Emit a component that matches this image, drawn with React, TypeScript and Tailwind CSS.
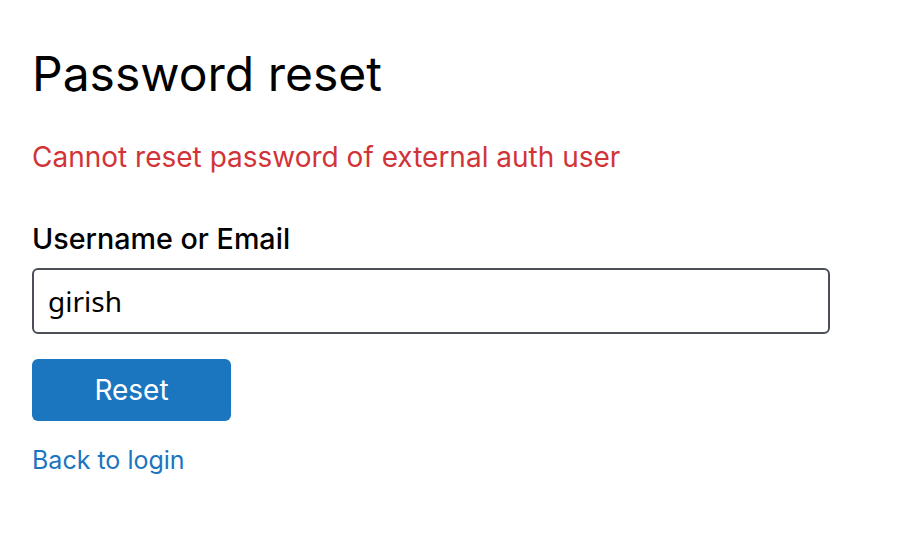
export default function App() {
  return (
    <main className="min-h-screen bg-white px-8 pt-[44px] font-['Inter',sans-serif] text-black">
      <h1 className="text-[48px] leading-[60px] font-normal">Password reset</h1>
      <p className="mt-[32px] text-[28px] leading-[42px] text-[#d13438]">
        Cannot reset password of external auth user
      </p>
      <form className="mt-[40px] flex flex-col">
        <label className="text-[28.7px] leading-[42px] font-medium">
          Username or Email
        </label>
        <input
          defaultValue="girish"
          className="mt-[8px] h-[66px] w-[798px] rounded-[6px] border-2 border-[#4b4f58] px-[14px] font-['Noto_Sans',sans-serif] text-[28px] outline-none"
        />
        <button
          type="button"
          className="mt-[25px] h-[62px] w-[199px] rounded-[6px] bg-[#1b75bf] text-[28px] text-white"
        >
          Reset
        </button>
        <a href="#" className="mt-[21px] w-fit text-[25px] leading-[36px] text-[#1b75bf]">
          Back to login
        </a>
      </form>
    </main>
  );
}
